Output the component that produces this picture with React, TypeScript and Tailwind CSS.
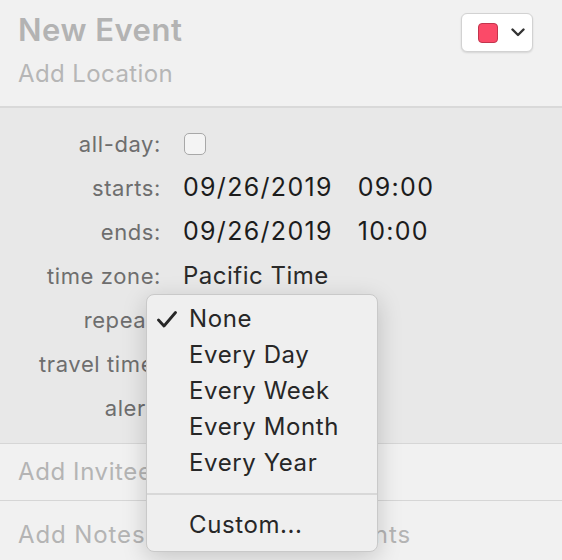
const rows: { label: string; value?: string | [string, string] }[] = [
    { label: 'all-day:' },
    { label: 'starts:', value: ['09/26/2019', '09:00'] },
    { label: 'ends:', value: ['09/26/2019', '10:00'] },
    { label: 'time zone:', value: 'Pacific Time' },
    { label: 'repeat:' },
    { label: 'travel time:' },
    { label: 'alert:' },
];

const options = ['None', 'Every Day', 'Every Week', 'Every Month', 'Every Year'];

function DateTime({ date, time }: { date: string; time: string }) {
    return (
        <div className="flex items-center gap-[25px] text-[25px] tracking-[1.3px] text-[#1c1c1c]">
            <span>{date}</span>
            <span>{time}</span>
        </div>
    );
}

function CheckMark() {
    return (
        <svg width="20" height="17" viewBox="0 0 20 17" fill="none">
            <path d="M1.5 9 L7 15 L18.5 1.5" stroke="#272727" strokeWidth="2.8" strokeLinecap="round" strokeLinejoin="round" />
        </svg>
    );
}

function RepeatMenu() {
    return (
        <div className="absolute left-[146px] top-[294px] w-[232px] rounded-[8px] border border-[#c9c9c9] bg-[#efefef] pt-[6px] pb-[8px] shadow-[0_6px_24px_rgba(0,0,0,0.18)]">
            {options.map((opt, i) => (
                <div key={opt} className="flex h-[36px] items-center text-[24px] tracking-[0.6px] text-[#272727]">
                    <span className="flex w-[42px] items-center pl-[10px]">{i === 0 && <CheckMark />}</span>
                    <span>{opt}</span>
                </div>
            ))}
            <div className="my-[12px] h-[2px] bg-[#d8d8d8]" />
            <div className="flex h-[36px] items-center pl-[42px] text-[24px] tracking-[0.6px] text-[#272727]">Custom...</div>
        </div>
    );
}

export default function App() {
    return (
        <div className="relative h-[560px] w-[562px] overflow-hidden bg-[#f1f1f1] font-['Inter',sans-serif]">
            <div className="flex h-[106px] justify-between px-[18px]">
                <div className="flex flex-col pt-[12px]">
                    <span className="text-[31px] font-semibold leading-[36px] tracking-[0.5px] text-[#b3b3b3]">New Event</span>
                    <span className="mt-[11px] text-[24px] leading-[30px] tracking-[0.4px] text-[#b6b6b6]">Add Location</span>
                </div>
                <div className="mt-[13px] mr-[11px] flex h-[39px] w-[72px] items-center gap-[13px] rounded-[6px] border border-[#d2d2d2] bg-white pl-[16px] shadow-[0_1px_2px_rgba(0,0,0,0.12)]">
                    <span className="h-[20px] w-[20px] rounded-[4px] border-[1.5px] border-[#c2354d] bg-[#fb4a68]" />
                    <svg width="14" height="9" viewBox="0 0 14 9" fill="none">
                        <path d="M1.5 1.5 L7 7 L12.5 1.5" stroke="#333" strokeWidth="2.4" strokeLinecap="round" strokeLinejoin="round" />
                    </svg>
                </div>
            </div>
            <div className="h-[2px] bg-[#d9d9d9]" />
            <div className="h-[335px] bg-[#e8e8e8] pt-[14px]">
                {rows.map((row) => (
                    <div key={row.label} className="flex h-[44px] items-center">
                        <span className="w-[161px] text-right text-[22px] tracking-[0.6px] text-[#6e6e6e]">{row.label}</span>
                        <div className="ml-[22px]">
                            {row.label === 'all-day:' && (
                                <div className="ml-[1px] h-[22px] w-[22px] rounded-[5px] border border-[#a8a8a8] bg-[#f4f4f4]" />
                            )}
                            {Array.isArray(row.value) && <DateTime date={row.value[0]} time={row.value[1]} />}
                            {typeof row.value === 'string' && (
                                <span className="text-[24px] tracking-[0.5px] text-[#2a2a2a]">{row.value}</span>
                            )}
                        </div>
                    </div>
                ))}
            </div>
            <div className="h-px bg-[#d6d6d6]" />
            <div className="flex h-[56px] items-center px-[18px] text-[24px] tracking-[0.6px] text-[#b4b4b4]">Add Invitees</div>
            <div className="h-px bg-[#d6d6d6]" />
            <div className="flex h-[68px] items-center px-[18px] text-[24px] tracking-[0.9px] text-[#b4b4b4]">
                Add Notes, URL, or Attachments
            </div>
            <RepeatMenu />
        </div>
    );
}
